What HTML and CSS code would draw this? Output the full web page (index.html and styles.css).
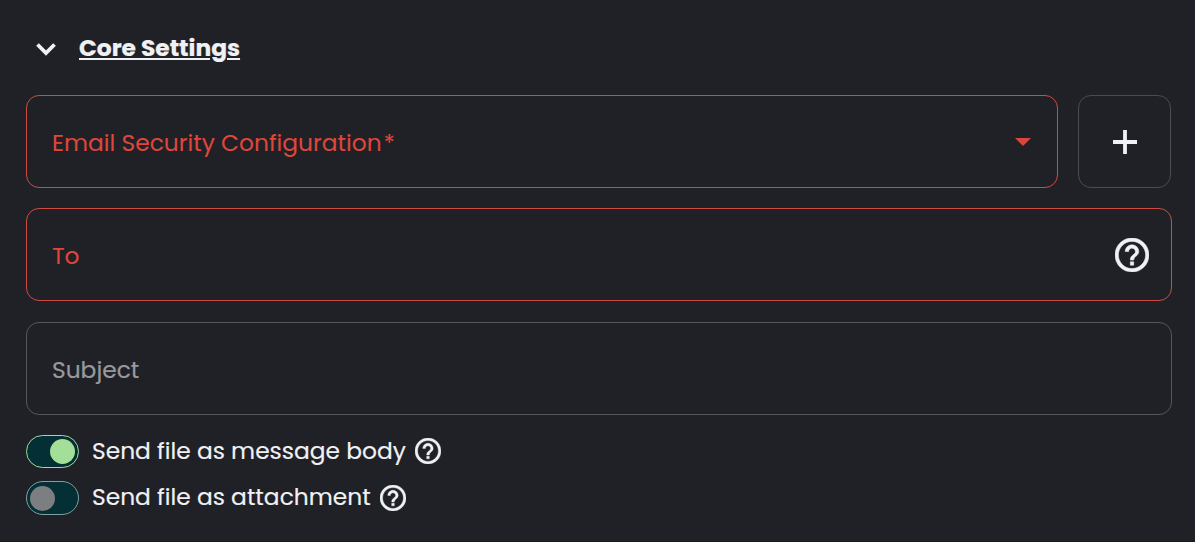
FILE: index.html
```html
<!DOCTYPE html>
<html lang="en">
<head>
<meta charset="utf-8">
<title>Core Settings</title>
<link rel="stylesheet" href="styles.css">
</head>
<body>
<svg class="sprite" width="0" height="0" aria-hidden="true">
  <symbol id="help" viewBox="2 2 20 20"><path d="M11 18h2v-2h-2v2zm1-16C6.480 2 2 6.480 2 12s4.480 10 10 10 10-4.480 10-10S17.520 2 12 2zm0 18c-4.410 0-8-3.590-8-8s3.590-8 8-8 8 3.590 8 8-3.590 8-8 8zm0-14c-2.210 0-4 1.790-4 4h2c0-1.100.900-2 2-2s2 .900 2 2c0 2-3 1.750-3 5h2c0-2.250 3-2.500 3-5 0-2.210-1.790-4-4-4z"/></symbol>
</svg>
<main class="panel">
  <header class="section-head">
    <svg class="chevron" viewBox="0 0 20 13"><path d="M1.500 1.500 10 10 18.500 1.500"/></svg>
    <h2 class="title">Core Settings</h2>
  </header>
  <div class="row">
    <div class="field field-error">
      <span class="label">Email Security Configuration</span><span class="star">*</span>
      <svg class="caret" viewBox="0 0 16 8"><path d="M0 0h16L8 8z"/></svg>
    </div>
    <button class="add" aria-label="Add"><svg class="plus" viewBox="0 0 24 24"><path d="M12 0v24M0 12h24"/></svg></button>
  </div>
  <div class="field field-error field-to">
    <span class="label">To</span>
    <svg class="help-large"><use href="#help"/></svg>
  </div>
  <div class="field field-subject">
    <span class="label">Subject</span>
  </div>
  <div class="option">
    <span class="toggle toggle-on"><span class="knob"></span></span>
    <span class="option-text">Send file as message body</span>
    <svg class="help-small help-body"><use href="#help"/></svg>
  </div>
  <div class="option option-attachment">
    <span class="toggle"><span class="knob"></span></span>
    <span class="option-text">Send file as attachment</span>
    <svg class="help-small"><use href="#help"/></svg>
  </div>
</main>
</body>
</html>
```
FILE: styles.css
```css
* { box-sizing: border-box; }
body {
  margin: 0;
  background: #202127;
  color: #f0f1f5;
  font-family: Poppins, Inter, "Open Sans", sans-serif;
  font-size: 23.33px;
}
svg { display: block; flex: none; }
.sprite { position: absolute; }
.panel {
  height: 542px;
  padding: 0 23px 0 26px;
  border-bottom: 1px solid #18181b;
}
.section-head {
  display: flex;
  align-items: center;
  height: 95px;
  padding-left: 10px;
}
.chevron {
  width: 20px;
  height: 13px;
  margin: 3px 23px 0 0;
  fill: none;
  stroke: #f0f1f5;
  stroke-width: 3.8;
}
.title {
  margin: 0;
  font-size: 23.33px;
  font-weight: 700;
  -webkit-text-stroke: 0.2px #f0f1f5;
  text-decoration: underline;
  text-decoration-thickness: 2px;
  text-underline-offset: 2px;
}
.row { display: flex; gap: 20px; margin-right: 1px; }
.field {
  display: flex;
  flex: 1;
  align-items: center;
  height: 93px;
  padding: 0 26px 0 25px;
  border: 1px solid #55565a;
  border-radius: 13px;
}
.field-error { border-color: #cf4b41; color: #e0463a; }
.label, .star { padding-top: 2px; white-space: nowrap; }
.star { margin-left: 2px; }
.caret { width: 16px; height: 8px; margin: 1px 0 0 auto; fill: #dc453a; }
.add {
  display: flex;
  align-items: center;
  justify-content: center;
  width: 93px;
  height: 93px;
  padding: 0;
  border: 1px solid #4b4c50;
  border-radius: 13px;
  background: none;
}
.plus { width: 24px; height: 24px; stroke: #f0f1f5; stroke-width: 3.8; }
.field-to { margin-top: 20px; padding-right: 22px; }
.help-large { width: 34px; height: 34px; margin-left: auto; fill: #f0f1f5; stroke: #f0f1f5; stroke-width: 0.3; overflow: visible; }
.field-subject { margin: 21px 0 20px; color: #98999c; -webkit-text-stroke: 0.2px #98999c; }
.option { display: flex; align-items: center; height: 33px; margin-bottom: 13px; }
.option-attachment { height: 34px; }
.toggle {
  display: flex;
  align-items: center;
  width: 53px;
  height: 100%;
  margin-right: 13px;
  padding: 0 3px;
  border: 1px solid #7f9fa0;
  border-radius: 17px;
  background: #032f35;
}
.knob { width: 25px; height: 25px; border-radius: 50%; background: #7c7e81; }
.toggle-on { justify-content: flex-end; border-color: #a0dc98; }
.toggle-on .knob { background: #a3df98; }
.option-text { padding-bottom: 2px; white-space: nowrap; -webkit-text-stroke: 0.15px #f0f1f5; }
.help-small { width: 26px; height: 26px; margin-left: 9px; fill: #f0f1f5; stroke: #f0f1f5; stroke-width: 0.3; overflow: visible; }
.help-body { margin-bottom: 1px; }
```
